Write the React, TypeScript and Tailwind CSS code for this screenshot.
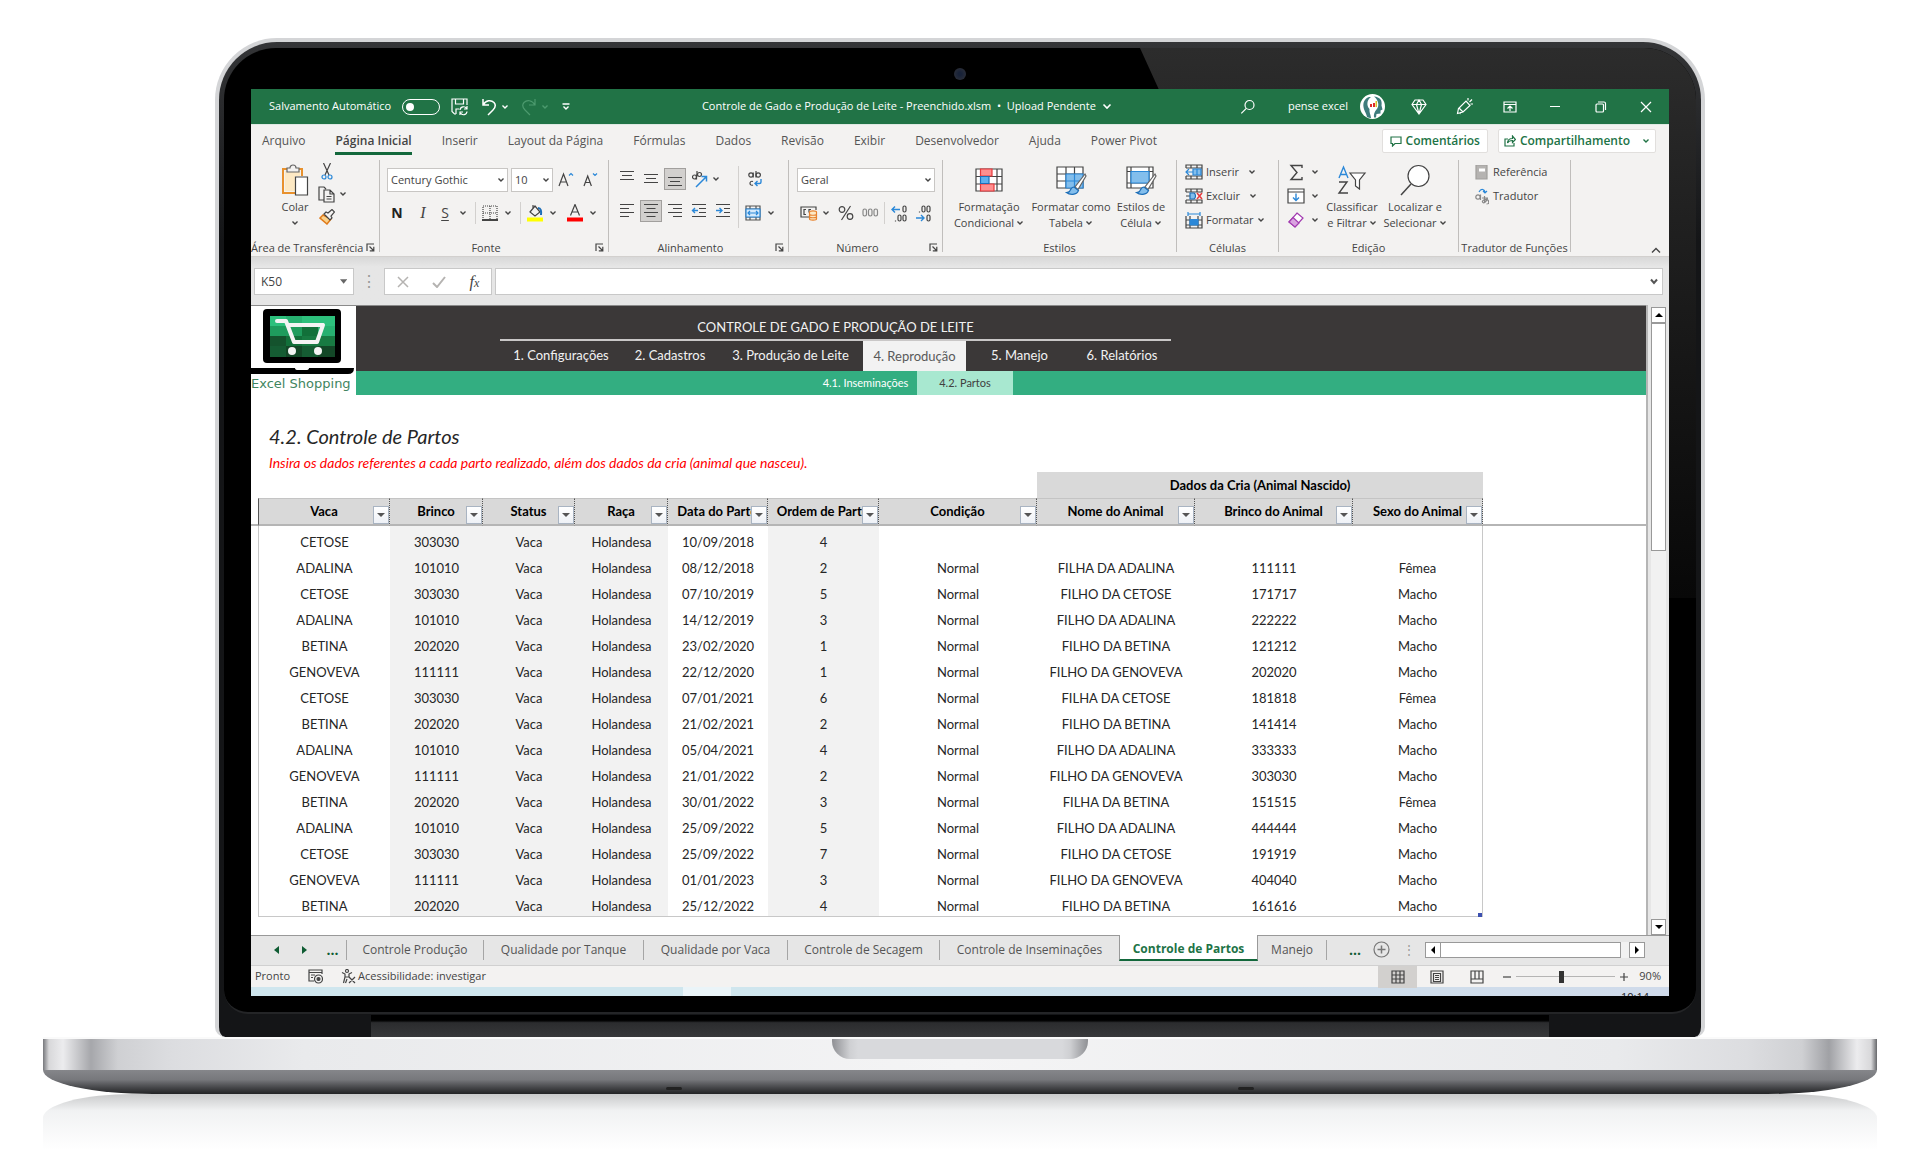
import React from 'react';
import clsx from 'clsx';

type Row = [string, string, string, string, string, string, string, string];

// vaca, brinco, data, ordem, condição, nome da cria, brinco da cria, sexo
const rows: Row[] = [
  ['CETOSE', '303030', '10/09/2018', '4', '', '', '', ''],
  ['ADALINA', '101010', '08/12/2018', '2', 'Normal', 'FILHA DA ADALINA', '111111', 'Fêmea'],
  ['CETOSE', '303030', '07/10/2019', '5', 'Normal', 'FILHO DA CETOSE', '171717', 'Macho'],
  ['ADALINA', '101010', '14/12/2019', '3', 'Normal', 'FILHO DA ADALINA', '222222', 'Macho'],
  ['BETINA', '202020', '23/02/2020', '1', 'Normal', 'FILHO DA BETINA', '121212', 'Macho'],
  ['GENOVEVA', '111111', '22/12/2020', '1', 'Normal', 'FILHO DA GENOVEVA', '202020', 'Macho'],
  ['CETOSE', '303030', '07/01/2021', '6', 'Normal', 'FILHA DA CETOSE', '181818', 'Fêmea'],
  ['BETINA', '202020', '21/02/2021', '2', 'Normal', 'FILHO DA BETINA', '141414', 'Macho'],
  ['ADALINA', '101010', '05/04/2021', '4', 'Normal', 'FILHO DA ADALINA', '333333', 'Macho'],
  ['GENOVEVA', '111111', '21/01/2022', '2', 'Normal', 'FILHO DA GENOVEVA', '303030', 'Macho'],
  ['BETINA', '202020', '30/01/2022', '3', 'Normal', 'FILHA DA BETINA', '151515', 'Fêmea'],
  ['ADALINA', '101010', '25/09/2022', '5', 'Normal', 'FILHO DA ADALINA', '444444', 'Macho'],
  ['CETOSE', '303030', '25/09/2022', '7', 'Normal', 'FILHO DA CETOSE', '191919', 'Macho'],
  ['GENOVEVA', '111111', '01/01/2023', '3', 'Normal', 'FILHO DA GENOVEVA', '404040', 'Macho'],
  ['BETINA', '202020', '25/12/2022', '4', 'Normal', 'FILHO DA BETINA', '161616', 'Macho'],
];

const columns = [
  { title: 'Vaca', width: 'w-[132px]', shaded: false },
  { title: 'Brinco', width: 'w-[93px]', shaded: true },
  { title: 'Status', width: 'w-[92px]', shaded: true },
  { title: 'Raça', width: 'w-[93px]', shaded: true },
  { title: 'Data do Parto', width: 'w-[100px]', shaded: false },
  { title: 'Ordem de Parto', width: 'w-[111px]', shaded: true },
  { title: 'Condição', width: 'w-[158px]', shaded: false },
  { title: 'Nome do Animal', width: 'w-[158px]', shaded: false },
  { title: 'Brinco do Animal', width: 'w-[158px]', shaded: false },
  { title: 'Sexo do Animal', width: 'w-[130px]', shaded: false },
];

const ribbonTabs = [
  'Arquivo', 'Página Inicial', 'Inserir', 'Layout da Página', 'Fórmulas', 'Dados',
  'Revisão', 'Exibir', 'Desenvolvedor', 'Ajuda', 'Power Pivot',
];

interface IconProps {
  w?: number;
  h?: number;
  className?: string;
  children: React.ReactNode;
}

const Icon: React.FC<IconProps> = ({ w = 16, h = 16, className, children }) => (
  <svg
    width={w}
    height={h}
    viewBox={`0 0 ${w} ${h}`}
    fill="none"
    stroke="currentColor"
    strokeWidth="1.2"
    className={clsx('shrink-0', className)}
    aria-hidden="true"
  >
    {children}
  </svg>
);

const Chevron = ({ className }: { className?: string }) => (
  <Icon w={8} h={6} className={className}>
    <path d="M1.5 1.5 4 4l2.5-2.5" strokeWidth="1.4" />
  </Icon>
);

const Tool = ({ label, className, children }: { label: string; className?: string; children: React.ReactNode }) => (
  <button type="button" aria-label={label} className={clsx('flex h-[22px] shrink-0 items-center justify-center', className)}>
    {children}
  </button>
);

const Group = ({ title, width, launcher, children }: { title: string; width: string; launcher?: boolean; children: React.ReactNode }) => (
  <>
    <section className={clsx('relative flex h-24 shrink-0 flex-col', width)}>
      <div className="flex h-20 items-start">{children}</div>
      <h3 className={clsx('text-center leading-4 whitespace-nowrap', launcher && 'pr-4')}>{title}</h3>
      {launcher && (
        <button type="button" aria-label={`Opções de ${title}`} className="absolute right-1 bottom-1">
          <Icon w={9} h={9}>
            <path d="M1 8V1h7M3.5 3.5 7.5 7.5M7.8 3.8v4h-4" />
          </Icon>
        </button>
      )}
    </section>
    <div className="h-[92px] w-px shrink-0 bg-[#c0bebc]" />
  </>
);

const Lines = ({ rows: widths, align, y = 2 }: { rows: number[]; align: 'l' | 'c' | 'r'; y?: number }) => (
  <Icon>
    {widths.map((len, i) => {
      const x = align === 'l' ? 1 : align === 'c' ? (16 - len) / 2 : 15 - len;
      return <path key={i} d={`M${x} ${y + i * 4 + 0.5}h${len}`} />;
    })}
  </Icon>
);

const Brush = () => (
  <g>
    <path d="M29 9 19 22l3 2.500L30 11z" fill="#fff" stroke="#666" />
    <path d="M18 22c-3 0-3.500 3-4.500 4.500-1 1-2.500 1-3 1 3 2.500 10 3 12-2z" fill="#83beec" stroke="#1e6fb8" />
  </g>
);

const BigButton = ({ lines, width, children }: { lines: [string, string]; width: string; children: React.ReactNode }) => (
  <button type="button" className={clsx('flex shrink-0 flex-col items-center pt-1 leading-4 whitespace-nowrap', width)}>
    <span className="mb-[3px] flex h-8 items-center">{children}</span>
    <span>{lines[0]}</span>
    <span className="flex items-center gap-0.5">
      {lines[1]}
      <Chevron />
    </span>
  </button>
);

const TitleBar = () => (
  <header className="flex h-[35px] items-center bg-[#217346] pl-[18px] text-[11px] text-white">
    <span id="autosave" className="w-[133px] whitespace-nowrap">Salvamento Automático</span>
    <button type="button" role="switch" aria-checked="false" aria-labelledby="autosave" className="flex h-4 w-[38px] items-center rounded-full border border-white pl-[3px]">
      <span className="size-2 rounded-full bg-white" />
    </button>
    <Tool label="Salvar" className="ml-[10px] w-5">
      <Icon w={18} h={18}>
        <path d="M5 16H3.500L1 13.500V1h15v6M4.500 1v5h8V1M5 16v-5h3" />
        <path d="M9 12a3.500 3.500 0 0 1 6.500-1.500M16 8v3h-3M16 13.500A3.500 3.500 0 0 1 9.500 15M9 17v-3h3" />
      </Icon>
    </Tool>
    <Tool label="Desfazer" className="ml-[9px] w-5">
      <Icon w={16} h={18}>
        <path d="M2 1v6h6M2 7c3-5 8-5.500 11-2.500 2.500 3 1 5.500-1 7.500L7 17" strokeWidth="1.5" />
      </Icon>
    </Tool>
    <Tool label="Opções de desfazer" className="w-3"><Chevron /></Tool>
    <Tool label="Refazer" className="ml-[8px] w-5 text-[#4c9a6e]">
      <Icon w={16} h={18}>
        <path d="M14 1v6H8M14 7c-3-5-8-5.500-11-2.500C.5 7.500 2 10 4 12l5 5" />
      </Icon>
    </Tool>
    <Tool label="Opções de refazer" className="w-3 text-[#4c9a6e]"><Chevron /></Tool>
    <Tool label="Personalizar" className="ml-[5px] w-5">
      <Icon w={8} h={8}><path d="M.5 1h7M1.500 3.500 4 6l2.500-2.500" strokeWidth="1.4" /></Icon>
    </Tool>
    <button type="button" className="mx-auto flex items-center gap-1.5 whitespace-nowrap">
      <h1>Controle de Gado e Produção de Leite - Preenchido.xlsm&nbsp; •&nbsp; Upload Pendente</h1>
      <Icon w={10} h={7}><path d="m1.500 1.500 3.500 3.500 3.500-3.500" strokeWidth="1.6" /></Icon>
    </button>
    <Tool label="Pesquisar" className="w-5">
      <Icon><circle cx="9.500" cy="6" r="4.500" /><path d="m6.300 9.300-5 5" /></Icon>
    </Tool>
    <button type="button" className="ml-[30px] flex items-center gap-3 whitespace-nowrap">
      pense excel
      <svg width="25" height="25" viewBox="0 0 25 25" aria-hidden="true">
        <circle cx="12.500" cy="12.500" r="12.500" fill="#fff" />
        <path d="M9 3C4 5 3 9 3.500 13 4 17 6 18 7 23c1.500.8 3 1 4 1-.5-4-2-6-1.500-9C6.500 12 6.500 6 11 3z" fill="#3d7c7c" />
        <path d="M14 2.500c6 .5 8.500 4 7.500 9l1 4-2 1v3l-4 .5-.5 3.500h-2c-.5-3 .5-6 2.500-8 3-3 2.500-9-2.500-13z" fill="#3d7c7c" />
        <path d="M10 10h2v3h-2zM13 9h2v4h-2z" fill="#e02b2b" />
        <path d="M15.500 7h1.500v6h-1.500z" fill="#d7c52a" />
      </svg>
    </button>
    <div className="ml-6 flex w-[260px] items-center justify-between pr-[13px]">
      <Tool label="Premium" className="w-5">
        <Icon><path d="M4 1h8l3 4.500L8 15 1 5.500zM1 5.500h14M5.500 5.500 8 15l2.500-9.500L8 1z" /></Icon>
      </Tool>
      <Tool label="Desenhar" className="w-5">
        <Icon w={17} h={17}><path d="m1.500 15.500 1-5L10 3l4 4.500-7 6.500zM3 10l4 4M5 14l-1 2M12 2.500V0M13.500 4 16 1.500M14.500 6H17" /></Icon>
      </Tool>
      <Tool label="Opções da faixa" className="w-5">
        <Icon w={14} h={12}><path d="M1 1h12v10H1zM1 3.500h12M7 10V5.500M4.500 7.500 7 5l2.500 2.500" /></Icon>
      </Tool>
      <Tool label="Minimizar" className="w-5">
        <Icon w={10} h={10}><path d="M0 4.500h10" /></Icon>
      </Tool>
      <Tool label="Restaurar" className="w-5">
        <Icon w={12} h={12}><rect x="1" y="3" width="7.500" height="8" rx="1" /><path d="M3 1h6q1.500 0 1.500 1.500V9" /></Icon>
      </Tool>
      <Tool label="Fechar" className="w-5">
        <Icon w={12} h={12}><path d="m1 1 10 10M11 1 1 11" /></Icon>
      </Tool>
    </div>
  </header>
);

const RibbonTabs = () => (
  <div className="flex h-9 items-start border-t border-[#dfe9e3] pt-1 pr-[13px] pl-[11px] text-xs">
    <nav className="flex items-start gap-[30px] leading-[23px] whitespace-nowrap text-[#555]">
      {ribbonTabs.map((tab) => (
        <button
          key={tab}
          type="button"
          className={clsx(tab === 'Página Inicial' && 'border-b-3 border-[#13683c] font-semibold text-[#444]')}
        >
          {tab}
        </button>
      ))}
    </nav>
    <div className="ml-auto flex gap-2.5 leading-6 font-semibold text-[#217346]">
      <button type="button" className="flex h-6 items-center gap-1 rounded-xs border border-[#e1dfdd] bg-white px-[7px]">
        <Icon w={12} h={11}><path d="M1 1h10v6.500H5L2.500 10V7.500H1z" /></Icon>
        Comentários
      </button>
      <button type="button" className="flex h-6 items-center gap-1 rounded-xs border border-[#e1dfdd] bg-white px-[5px]">
        <Icon w={12} h={12}><path d="M4 4H1v7h9V8M3.500 8c0-3 2-4.500 5-4.500V1L11.500 4.500 8.500 7.500V5.500C6 5.500 4.500 6 3.500 8z" /></Icon>
        Compartilhamento
        <Chevron className="ml-2" />
      </button>
    </div>
  </div>
);

const ClipboardGroup = () => (
  <Group title="Área de Transferência" width="w-32" launcher>
    <button type="button" className="flex w-[62px] flex-col items-center pt-1 pl-[26px] leading-4">
      <Icon w={28} h={32}>
        <path d="M8 5H2v24h12M16 5h5v7" stroke="#e8912d" strokeWidth="2" />
        <path d="M4 7h15v5h-5v15H4z" fill="#fde9c4" stroke="none" />
        <path d="M6 8V4h3c0-4 6-4 6 0h3v4z" fill="#f3f2f1" stroke="#666" />
        <path d="M14.500 13h12v18h-12z" fill="#fff" stroke="#444" />
      </Icon>
      <span className="mt-[3px]">Colar</span>
      <Chevron className="mt-[5px]" />
    </button>
    <div className="flex flex-col pl-[4px]">
      <Tool label="Recortar" className="h-6 w-5">
        <Icon w={12} h={17}>
          <path d="m2.500 0 5.500 12M9.500 0 4 12" />
          <circle cx="3" cy="14" r="2" stroke="#2b88d8" /><circle cx="9" cy="14" r="2" stroke="#2b88d8" />
        </Icon>
      </Tool>
      <div className="flex h-6 items-center">
        <Tool label="Copiar" className="w-[18px]">
          <Icon w={17} h={17}>
            <path d="M6 14H1V1h5l2 2M6 4h6l4 4v8H6zM12 4v4h4M8.500 10.500h5M8.500 13h5" />
          </Icon>
        </Tool>
        <Chevron className="ml-[4px]" />
      </div>
      <Tool label="Pincel de formatação" className="h-6 w-5">
        <Icon w={16} h={16}>
          <path d="m4 6-3 3 7 6 4-5z" fill="#fbd28b" stroke="#e07b1a" strokeWidth="1.5" />
          <path d="m5 5 6 6 2-2-1-2 3.500-4L13 .500 9 4 7 3z" fill="#f3f2f1" stroke="#444" />
        </Icon>
      </Tool>
    </div>
  </Group>
);

const FontGroup = () => (
  <Group title="Fonte" width="w-[228px]" launcher>
    <div className="flex flex-col gap-[10px] pt-2 pl-[7px]">
      <div className="flex h-6 items-center">
        <label className="relative mr-[3px] flex h-6 w-[121px] items-center border border-[#c8c6c4] bg-white">
          <select aria-label="Fonte" className="w-full appearance-none pl-[3px] outline-none"><option>Century Gothic</option></select>
          <Chevron className="pointer-events-none absolute right-0.5" />
        </label>
        <label className="relative mr-px flex h-6 w-[42px] items-center border border-[#c8c6c4] bg-white">
          <select aria-label="Tamanho" className="w-full appearance-none pl-[3px] outline-none"><option>10</option></select>
          <Chevron className="pointer-events-none absolute right-0.5" />
        </label>
        <Tool label="Aumentar fonte" className="w-6">
          <Icon w={16} h={16}><path d="m1 14 4.500-12L10 14M2.500 10h6" /><path d="m11 3.500 2-2 2 2" stroke="#2b88d8" /></Icon>
        </Tool>
        <Tool label="Diminuir fonte" className="w-6">
          <Icon w={16} h={16}><path d="m2 14 3.700-10 3.700 10M3.500 10.500h4.500" /><path d="m11 1.500 2 2 2-2" stroke="#2b88d8" /></Icon>
        </Tool>
      </div>
      <div className="flex items-center text-sm">
        <Tool label="Negrito" className="w-6 pr-1 font-bold text-[#222]">N</Tool>
        <Tool label="Itálico" className="w-6 font-['Liberation_Serif',serif] text-base italic">I</Tool>
        <Tool label="Sublinhado" className="w-5 underline underline-offset-2">S</Tool>
        <Tool label="Opções de sublinhado" className="w-4"><Chevron /></Tool>
        <span className="mx-1 h-[22px] w-px bg-[#d2d0ce]" />
        <Tool label="Bordas" className="w-5">
          <Icon><path d="M1 15V1h14v14M8 1v14M1 8h14" strokeDasharray="1 1" /><path d="M0 15h16" strokeWidth="2" /></Icon>
        </Tool>
        <Tool label="Opções de bordas" className="w-4"><Chevron /></Tool>
        <span className="mx-1 h-[22px] w-px bg-[#d2d0ce]" />
        <Tool label="Cor de preenchimento" className="w-5">
          <Icon w={16} h={18}>
            <path d="m3 8 5-6 5 6-5 4zM6 5V1" /><path d="M11 4c3 0 3.500 3 3 7" stroke="#1e6fb8" strokeWidth="2" />
            <path d="M0 15.500h16" stroke="#ff0" strokeWidth="4" />
          </Icon>
        </Tool>
        <Tool label="Opções de preenchimento" className="w-4"><Chevron /></Tool>
        <Tool label="Cor da fonte" className="ml-1 w-5">
          <Icon w={16} h={18}>
            <path d="m3.500 11.500 4.500-11 4.500 11M5 8h6" /><path d="M0 15.500h16" stroke="#f00" strokeWidth="4" />
          </Icon>
        </Tool>
        <Tool label="Opções de cor" className="w-4"><Chevron /></Tool>
      </div>
    </div>
  </Group>
);

const AlignGroup = () => (
  <Group title="Alinhamento" width="w-[179px]" launcher>
    <div className="flex flex-col gap-3 pt-2 pl-[7px]">
      <div className="flex gap-0.5">
        <Tool label="Alinhar em cima" className="w-[22px]"><Lines rows={[14, 10, 14]} align="c" y={0} /></Tool>
        <Tool label="Alinhar no meio" className="w-[22px]"><Lines rows={[14, 10, 14]} align="c" y={3} /></Tool>
        <Tool label="Alinhar embaixo" className="h-6 w-[22px] border border-[#a19f9d] bg-[#d2d0ce]"><Lines rows={[14, 10, 14]} align="c" y={6} /></Tool>
        <Tool label="Orientação" className="w-[22px]">
          <Icon w={17} h={17}>
            <circle cx="3.500" cy="6" r="2" /><path d="M5.500 3.500v5" /><circle cx="8.500" cy="3.500" r="2" /><path d="M6 0v5.500" />
            <path d="M5 16 15 6M10.500 5.500H15.500V10.500" stroke="#2b88d8" strokeWidth="1.5" />
          </Icon>
        </Tool>
        <Chevron className="self-center" />
      </div>
      <div className="-mt-0.5 flex gap-0.5">
        <Tool label="Alinhar à esquerda" className="w-[22px]"><Lines rows={[14, 9, 14, 9]} align="l" y={1} /></Tool>
        <Tool label="Centralizar" className="h-6 w-[22px] border border-[#a19f9d] bg-[#d2d0ce]"><Lines rows={[14, 9, 14, 9]} align="c" y={1} /></Tool>
        <Tool label="Alinhar à direita" className="w-[22px]"><Lines rows={[14, 9, 14, 9]} align="r" y={1} /></Tool>
        <Tool label="Diminuir recuo" className="w-[22px]">
          <Icon><path d="M1 1.500h14M8 5.500h7M8 9.500h7M1 13.500h14" /><path d="M7 7.500H1.500M4 5 1.500 7.500 4 10" stroke="#2b88d8" strokeWidth="1.400" /></Icon>
        </Tool>
        <Tool label="Aumentar recuo" className="w-[22px]">
          <Icon><path d="M1 1.500h14M9 5.500h6M9 9.500h6M1 13.500h14" /><path d="M1 7.500h6M4.500 5 7 7.500 4.500 10" stroke="#2b88d8" strokeWidth="1.400" /></Icon>
        </Tool>
      </div>
    </div>
    <span className="mx-1 mt-1.5 h-[62px] w-px bg-[#d2d0ce]" />
    <div className="flex flex-col gap-3 pt-2">
      <Tool label="Quebrar texto" className="w-6">
        <Icon w={16} h={18}>
          <circle cx="4" cy="5" r="2.200" /><path d="M6.200 2.500v5M9 1v6.500" /><circle cx="11.200" cy="5" r="2.200" />
          <path d="M6 11.500c-4-1.500-4 5 0 3.500" /><path d="M14 9v3q0 1.500-1.500 1.500H8M10.500 11 8 13.500l2.500 2.500" stroke="#2b88d8" strokeWidth="1.400" />
        </Icon>
      </Tool>
      <div className="flex items-center">
        <Tool label="Mesclar e centralizar" className="w-5">
          <Icon>
            <path d="M1 1h14v14H1zM1 4h14M1 12h14M5 1v3M11 1v3M5 12v3M11 12v3" stroke="#555" />
            <path d="M1 4h14v8H1z" fill="#d6eafb" stroke="#2b88d8" />
            <path d="M3 8h10M5 6 3 8l2 2M11 6l2 2-2 2" stroke="#2b88d8" />
          </Icon>
        </Tool>
        <Tool label="Opções de mesclagem" className="w-4"><Chevron /></Tool>
      </div>
    </div>
  </Group>
);

const NumberGroup = () => (
  <Group title="Número" width="w-[153px]" launcher>
    <div className="flex flex-col gap-[10px] pt-2 pl-[8px]">
      <label className="relative flex h-6 w-[138px] items-center border border-[#c8c6c4] bg-white">
        <select aria-label="Formato de número" className="w-full appearance-none pl-[3px] outline-none"><option>Geral</option></select>
        <Chevron className="pointer-events-none absolute right-0.5" />
      </label>
      <div className="flex items-center">
        <Tool label="Formato de contabilização" className="w-6">
          <Icon w={18} h={16}>
            <path d="M9 12H1V2h15v3M6 4.500H4v5h2M11 4.500H9v3" />
            <path d="M9.500 7c0-1.500 7-1.500 7 0v7c0 1.500-7 1.500-7 0zM9.500 9.500c1 1 6 1 7 0M9.500 12c1 1 6 1 7 0" fill="#fde9c4" stroke="#e8822d" />
          </Icon>
        </Tool>
        <Tool label="Opções de contabilização" className="w-2.5"><Chevron /></Tool>
        <Tool label="Porcentagem" className="ml-[3px] w-6">
          <Icon><circle cx="4" cy="4.500" r="2.800" /><circle cx="12" cy="11.500" r="2.800" /><path d="M12.500 1 3.500 15" /></Icon>
        </Tool>
        <Tool label="Separador de milhares" className="w-6 text-[#888]">
          <Icon w={17} h={10}><rect x="1" y="1" width="3.500" height="7" rx="1.700" /><rect x="6.500" y="1" width="3.500" height="7" rx="1.700" /><rect x="12" y="1" width="3.500" height="7" rx="1.700" /></Icon>
        </Tool>
        <span className="mx-[2px] h-[22px] w-px bg-[#d2d0ce]" />
        <Tool label="Aumentar casas decimais" className="w-6">
          <Icon w={17} h={17}>
            <path d="M1 4.500h8M4 1.500l-3 3 3 3" stroke="#2b88d8" strokeWidth="1.400" />
            <rect x="12" y="1" width="3" height="6" rx="1.500" /><rect x="7" y="10" width="3" height="6" rx="1.500" /><rect x="12" y="10" width="3" height="6" rx="1.500" /><path d="M4.500 15.500v1" />
          </Icon>
        </Tool>
        <Tool label="Diminuir casas decimais" className="w-6">
          <Icon w={17} h={17}>
            <rect x="7" y="1" width="3" height="6" rx="1.500" /><rect x="12" y="1" width="3" height="6" rx="1.500" /><rect x="12" y="10" width="3" height="6" rx="1.500" /><path d="M4.500 6.500v1" />
            <path d="M1 13h8M6 10l3 3-3 3" stroke="#2b88d8" strokeWidth="1.400" />
          </Icon>
        </Tool>
      </div>
    </div>
  </Group>
);

const StylesGroup = () => (
  <Group title="Estilos" width="w-[233px]">
    <BigButton lines={['Formatação', 'Condicional']} width="w-[82px] ml-[5px]">
      <Icon w={28} h={24}>
        <path d="M1 1h26v22H1zM1 8.500h26M1 16h26M22 1v22" fill="#fff" />
        <path d="M5.500 1H17v7H5.500zM5.500 16H19v7H5.500z" fill="#ff8f8f" stroke="#e8393c" />
        <path d="M5.500 8.500H14v7H5.500z" fill="#5fb0ee" stroke="#1e6fb8" />
      </Icon>
    </BigButton>
    <BigButton lines={['Formatar como', 'Tabela']} width="w-[82px]">
      <Icon w={31} h={31}>
        <path d="M1 2h26v21H1zM1 9h26M1 16h26M10 2v21M18.500 2v21" fill="#fff" />
        <path d="M10 9h17v14H10zM10 16h17M18.500 9v14" fill="#83beec" stroke="#2b88d8" />
        <Brush />
      </Icon>
    </BigButton>
    <BigButton lines={['Estilos de', 'Célula']} width="w-[58px]">
      <Icon w={31} h={31}>
        <path d="M1 2h26v21H1zM1 6.500h26M1 18h26M5 2v21M23 2v21" fill="#fff" />
        <path d="M5 6.500h18V18H5z" fill="#83beec" stroke="#2b88d8" />
        <Brush />
      </Icon>
    </BigButton>
  </Group>
);

const CellsGroup = () => (
  <Group title="Células" width="w-[101px]">
    <div className="flex flex-col pl-2">
      <button type="button" className="flex h-6 items-center gap-[3px]">
        <Icon w={18} h={16}>
          <path d="M1 4V1h16v14H1v-3M1 4h16M1 12h16M6 1v3M12 1v3M6 12v3M12 12v3" />
          <path d="M8 5h8v6H8zM12 5v6" fill="#83beec" stroke="#2b88d8" /><path d="M8 8H1M4 5 1 8l3 3" stroke="#2b88d8" />
        </Icon>
        Inserir
        <Chevron className="ml-1.5" />
      </button>
      <button type="button" className="flex h-6 items-center gap-[3px]">
        <Icon w={18} h={16}>
          <path d="M1 4V1h16v3H1M1 12h16v3H1v-3M6 1v3M12 1v3M6 12v3M12 12v3M1 8h4" />
          <path d="M5 5h4c2 1 2 5 0 6H5z" fill="#83beec" stroke="#1e6fb8" /><path d="m12 5 5 6M17 5l-5 6" stroke="#e8393c" strokeWidth="1.500" />
        </Icon>
        Excluir
        <Chevron className="ml-1.5" />
      </button>
      <button type="button" className="flex h-6 items-center gap-[3px]">
        <Icon w={18} h={17}>
          <path d="M1 4v12h16V4M1 8h16M1 13h16M5 4v12M13 4v12" />
          <path d="M5 7.500h8V13H5z" fill="#2b88d8" stroke="#2b88d8" /><path d="M3 2h12M3 0v4M15 0v4" stroke="#2b88d8" />
        </Icon>
        Formatar
        <Chevron />
      </button>
    </div>
  </Group>
);

const EditGroup = () => (
  <Group title="Edição" width="w-[179px]">
    <div className="flex w-11 flex-col pl-2">
      <button type="button" aria-label="AutoSoma" className="flex h-6 items-center justify-between pr-1">
        <Icon w={16} h={17} className="ml-0.5"><path d="M13 4V1.500H2l6 7-6 7h11V13" strokeWidth="1.400" /></Icon>
        <Chevron />
      </button>
      <button type="button" aria-label="Preencher" className="flex h-6 items-center justify-between pr-1">
        <Icon w={18} h={16}><path d="M1 1h16v14H1zM1 4h16" fill="#fff" /><path d="M9 5.500v7M6 9.500l3 3 3-3" stroke="#2b88d8" strokeWidth="1.400" /></Icon>
        <Chevron />
      </button>
      <button type="button" aria-label="Limpar" className="flex h-6 items-center justify-between pr-1">
        <Icon w={18} h={18}>
          <path d="m10 2 6 5-8 9-6-5z" fill="#fff" stroke="#a23bb0" /><path d="m6 6.500 6 5.500-4 4-6-5z" fill="#d9a3e0" stroke="#a23bb0" />
        </Icon>
        <Chevron />
      </button>
    </div>
    <BigButton lines={['Classificar', 'e Filtrar']} width="w-[58px]">
      <Icon w={30} h={30}>
        <path d="m2 13 4.500-11L11 13M3.500 9.500h6" stroke="#2b88d8" strokeWidth="1.400" />
        <path d="M2 17h8L2 28h9" strokeWidth="1.400" />
        <path d="M13 8h15l-5.500 7v9l-4-3v-6z" fill="#fff" />
      </Icon>
    </BigButton>
    <BigButton lines={['Localizar e', 'Selecionar']} width="w-[68px]">
      <Icon w={30} h={32}><circle cx="18.500" cy="12" r="10.500" fill="#fff" /><path d="M11 20 1 31" strokeWidth="1.500" /></Icon>
    </BigButton>
  </Group>
);

const TranslateGroup = () => (
  <Group title="Tradutor de Funções" width="w-[111px]">
    <div className="flex flex-col pl-4">
      <button type="button" className="flex h-6 items-center gap-1">
        <Icon w={14} h={15}><path d="M1 0h11v14H1z" fill="#b5b3b1" stroke="#a19f9d" /><path d="M4 3.500h6v3H4z" fill="#fff" stroke="none" /></Icon>
        Referência
      </button>
      <button type="button" className="flex h-6 items-center gap-1">
        <Icon w={14} h={17}>
          <circle cx="3" cy="9" r="2.200" stroke="#888" /><path d="M5.500 6.500V12" stroke="#888" />
          <path d="M4 4c2-4 6-3 6 1M8 3l2 2 2-2" stroke="#2b88d8" />
          <path d="M7 10h6M9.500 8v7M12.500 10c-1 4-4 6-5 4s5-4 6-1-1 3-2 3" stroke="#888" />
        </Icon>
        Tradutor
      </button>
    </div>
  </Group>
);

const FormulaBar = () => (
  <div className="flex h-[49px] items-start border-t border-[#d2d0ce] bg-linear-to-b from-[#d8d8d8] to-[#e6e6e6] to-20% pt-[11px] pr-[6px] pl-[3px]">
    <div className="flex h-[27px] w-[100px] items-center border border-[#c8c8c8] bg-white pr-1.5">
      <input aria-label="Caixa de nome" defaultValue="K50" className="w-full pl-[6px] text-xs outline-none" />
      <svg width="8" height="5" viewBox="0 0 8 5" aria-hidden="true"><path d="M0 0h8L4 5z" fill="#666" /></svg>
    </div>
    <span className="w-[30px] text-center text-base leading-[27px] text-[#999]">⋮</span>
    <div className="flex h-[27px] w-[108px] items-center justify-around border border-[#c8c8c8] bg-white text-[#b5b3b1]">
      <button type="button" aria-label="Cancelar"><Icon w={12} h={12}><path d="m1 1 10 10M11 1 1 11" strokeWidth="1.500" /></Icon></button>
      <button type="button" aria-label="Inserir"><Icon w={14} h={12}><path d="m1 7 4 4 8-10" strokeWidth="2" /></Icon></button>
      <button type="button" aria-label="Inserir função" className="font-['Liberation_Serif',serif] text-base leading-5 text-[#444] italic">f<span className="text-xs">x</span></button>
    </div>
    <div className="ml-[3px] flex h-[27px] flex-1 items-center border border-[#c8c8c8] bg-white pr-1">
      <input aria-label="Barra de fórmulas" className="w-full px-1 text-xs outline-none" />
      <Icon w={8} h={7} className="text-[#555]"><path d="M1 1.500 4 5l3-3.500" strokeWidth="2" /></Icon>
    </div>
  </div>
);

const Logo = () => (
  <div className="flex w-[105px] shrink-0 flex-col bg-white">
    <svg width="105" height="70" viewBox="0 0 105 70" aria-label="Excel Shopping">
      <rect x="12" y="3" width="78" height="54" rx="4" fill="#000" />
      <path d="M19 10h65v10H19z" fill="#2dc07c" />
      <path d="M19 20h65v10H19z" fill="#1f9c5d" />
      <path d="M19 30h65v10H19z" fill="#187a42" />
      <path d="M19 40h65v11H19z" fill="#155c33" />
      <path d="M35 10h16v10H35zM67 20h17v10H67z" fill="#27b070" />
      <path d="M51 20h16v10H51zM35 30h16v10H35z" fill="#12703a" />
      <path d="M19 30h16v10H19zM35 40h16v11H35zM67 40h17v11H67z" fill="#12381f" opacity=".6" />
      <path d="M26 15h9l8 21h23l6-17H38" fill="none" stroke="#f4f4f4" strokeWidth="4" strokeLinecap="round" strokeLinejoin="round" />
      <circle cx="41" cy="45" r="4" fill="#f4f4f4" />
      <circle cx="67" cy="45" r="4" fill="#f4f4f4" />
      <path d="M0 62h44q0 2 3 2h8q3 0 3-2h45q0 6-6 6H0z" fill="#000" />
    </svg>
    <span className="font-['DejaVu_Sans',sans-serif] text-[13px] leading-4 whitespace-nowrap text-[#3f8560]">Excel Shopping</span>
  </div>
);

const SheetHeader = () => (
  <div className="flex border-t border-[#8a8a8a] text-[13px] text-[#f2f2f2]">
    <Logo />
    <div className="flex-1">
      <div className="h-[65px] bg-[#3b3838] pl-[144px]">
        <div className="flex w-[671px] flex-col">
          <h2 className="border-b-2 border-[#c9c7c7] pt-[9px] text-center leading-6">CONTROLE DE GADO E PRODUÇÃO DE LEITE</h2>
          <nav className="flex h-[30px] items-center whitespace-nowrap">
            <a href="#configuracoes" className="w-[122px] text-center">1. Configurações</a>
            <a href="#cadastros" className="w-[96px] text-center">2. Cadastros</a>
            <a href="#producao" className="w-[145px] text-center">3. Produção de Leite</a>
            <a href="#reproducao" className="h-full w-[103px] bg-[#f2f2f2] text-center leading-[30px] text-[#595959]">4. Reprodução</a>
            <a href="#manejo" className="w-[107px] text-center">5. Manejo</a>
            <a href="#relatorios" className="w-[98px] text-center">6. Relatórios</a>
          </nav>
        </div>
      </div>
      <nav className="flex h-6 bg-[#33ae81] pl-[458px] text-[11px] leading-6">
        <a href="#inseminacoes" className="w-[103px] text-center text-white">4.1. Inseminações</a>
        <a href="#partos" className="w-24 bg-[#a8e8d0] text-center text-[#404040]">4.2. Partos</a>
      </nav>
    </div>
  </div>
);

const BirthTable = () => (
  <div className="flex">
    <div className="mt-[52px] w-[7px] border-t-2 border-[#b5b5b5]" />
    <table className="w-[calc(100%-170px)] table-fixed border-separate border-spacing-0 text-[13px] text-[#262626]">
      <colgroup>
        {columns.map((col) => <col key={col.title} className={col.width} />)}
      </colgroup>
      <thead className="text-black">
        <tr className="h-[26px]">
          <td colSpan={7} />
          <th colSpan={3} className="bg-[#d9d9d9] p-0 pt-0.5 font-bold">Dados da Cria (Animal Nascido)</th>
        </tr>
        <tr className="h-7">
          {columns.map((col) => (
            <th key={col.title} className="relative border-t border-r border-b-2 border-t-[#c4c4c4] border-r-[#555] border-b-[#b5b5b5] bg-[#d9d9d9] p-0 font-bold [border-right-style:dotted] first:border-l first:border-l-[#555]">
              <div className="flex justify-center overflow-hidden whitespace-nowrap">{col.title}</div>
              <button type="button" aria-label={`Filtrar ${col.title}`} className="absolute right-0 bottom-0 flex h-[18px] w-4 items-center justify-center border border-[#a9b4c2] bg-linear-to-b from-white to-[#eef1f6]">
                <svg width="8" height="4" viewBox="0 0 8 4" aria-hidden="true"><path d="M0 0h8L4 4z" fill="#555" /></svg>
              </button>
            </th>
          ))}
        </tr>
      </thead>
      <tbody>
        {rows.map(([vaca, brinco, ...rest], i) => (
          <tr key={i} className="h-[26px]">
            {[vaca, brinco, 'Vaca', 'Holandesa', ...rest].map((value, c) => (
              <td
                key={c}
                className={clsx(
                  'p-0 pt-1.5 text-center leading-5 whitespace-nowrap first:border-l first:border-[#c8c8c8] last:border-r last:border-[#c8c8c8]',
                  columns[c].shaded && 'bg-[#f2f2f2]',
                  i === rows.length - 1 && 'border-b border-[#c8c8c8]',
                )}
              >
                {value}
              </td>
            ))}
          </tr>
        ))}
      </tbody>
    </table>
    <div className="flex flex-1 flex-col">
      <div className="mt-[52px] flex-1 border-t-2 border-[#b5b5b5]" />
      <span className="-ml-[5px] size-1 bg-[#3c50b0]" />
    </div>
  </div>
);

const VerticalScroll = () => (
  <div className="flex w-[23px] flex-col border-l-2 border-[#b5b5b5] bg-[#e6e6e6] px-[3px] pt-0.5">
    <button type="button" aria-label="Rolar para cima" className="flex h-4 items-center justify-center border border-[#999] bg-white">
      <svg width="8" height="4" viewBox="0 0 8 4" aria-hidden="true"><path d="M0 4h8L4 0z" fill="#000" /></svg>
    </button>
    <div className="flex-1 bg-[#f1f1f1]"><div className="h-[228px] border border-[#999] bg-white" /></div>
    <button type="button" aria-label="Rolar para baixo" className="flex h-4 items-center justify-center border border-[#999] bg-white">
      <svg width="8" height="4" viewBox="0 0 8 4" aria-hidden="true"><path d="M0 0h8L4 4z" fill="#000" /></svg>
    </button>
  </div>
);

const SheetTabs = () => (
  <div className="flex h-[30px] items-center border-t border-[#999] bg-[#e6e6e6] pr-6 pb-0.5 pl-[21px] text-xs whitespace-nowrap text-[#555]">
    <button type="button" aria-label="Anterior" className="flex w-2 justify-center"><svg width="5" height="8" viewBox="0 0 5 8"><path d="M5 0v8L0 4z" fill="#0f5c33" /></svg></button>
    <button type="button" aria-label="Próxima" className="ml-5 flex w-2 justify-center"><svg width="5" height="8" viewBox="0 0 5 8"><path d="M0 0v8l5-4z" fill="#0f5c33" /></svg></button>
    <button type="button" className="ml-[15px] w-[23px] pr-1 text-center text-sm font-bold text-[#0f5c33]">...</button>
    <button type="button" className="h-5 w-[138px] border-x border-[#a5a5a5] leading-5">Controle Produção</button>
    <button type="button" className="h-5 w-[160px] border-r border-[#a5a5a5] leading-5">Qualidade por Tanque</button>
    <button type="button" className="h-5 w-[144px] border-r border-[#a5a5a5] leading-5">Qualidade por Vaca</button>
    <button type="button" className="h-5 w-[152px] border-r border-[#a5a5a5] leading-5">Controle de Secagem</button>
    <button type="button" className="h-5 w-[179px] leading-5">Controle de Inseminações</button>
    <button type="button" className="-mt-px h-[26px] w-[139px] self-start border-x border-b-2 border-x-[#999] border-b-[#13683c] bg-white pt-1 font-bold text-[#217346]">Controle de Partos</button>
    <button type="button" className="h-5 w-[69px] border-r border-[#a5a5a5] leading-5">Manejo</button>
    <button type="button" className="ml-[18px] w-5 text-sm font-bold text-[#0f5c33]">...</button>
    <button type="button" aria-label="Nova planilha" className="ml-2 text-[#777]">
      <Icon w={17} h={17}><circle cx="8.500" cy="8.500" r="7.500" /><path d="M8.500 4.500v8M4.500 8.500h8" strokeWidth="1.500" /></Icon>
    </button>
    <span className="ml-[13px] w-3 text-center text-[#999]">⋮</span>
    <div className="ml-auto flex h-4 w-[220px]">
      <button type="button" aria-label="Rolar para a esquerda" className="flex w-4 items-center justify-center border border-[#999] bg-white"><svg width="4" height="8" viewBox="0 0 4 8"><path d="M4 0v8L0 4z" fill="#000" /></svg></button>
      <div className="flex-1 border border-l-0 border-[#999] bg-white" />
      <div className="w-2 bg-[#f1f1f1]" />
      <button type="button" aria-label="Rolar para a direita" className="flex w-4 items-center justify-center border border-[#999] bg-white"><svg width="4" height="8" viewBox="0 0 4 8"><path d="M0 0v8l4-4z" fill="#000" /></svg></button>
    </div>
  </div>
);

const StatusBar = () => (
  <footer className="flex h-[22px] items-center border-t border-[#d0d0d0] bg-[#f3f2f1] pl-1 whitespace-nowrap">
    <span className="w-[53px]">Pronto</span>
    <Icon w={15} h={15}><path d="M6 12H1V1h13v4M1 3.500h13M3 6h4M3 8.500h2" /><circle cx="10.500" cy="10" r="4" /><circle cx="10.500" cy="10" r="1.500" fill="currentColor" /></Icon>
    <button type="button" className="ml-[18px] flex items-center gap-0.5">
      <Icon w={15} h={15}><circle cx="6" cy="2" r="1.500" /><path d="M1 3.500 4 5v3l-1.500 6M11 3.500 8 5v3M4 8l4 0M8 8l6 6M14 8l-6 6M4.500 14 6 10" /></Icon>
      Acessibilidade: investigar
    </button>
    <div className="ml-auto flex h-full items-center">
      <Tool label="Normal" className="w-[39px] bg-[#d2d0ce]"><Icon w={14} h={14}><path d="M1 1h12v12H1zM1 5h12M1 9h12M5 1v12M9 1v12" /></Icon></Tool>
      <Tool label="Layout da página" className="w-10"><Icon w={14} h={14}><path d="M1 1h12v12H1zM3.500 3.500h7v8h-7zM5 5.500h4M5 7.500h4M5 9.500h4" /></Icon></Tool>
      <Tool label="Quebra de página" className="w-10"><Icon w={14} h={14}><path d="M1 1h12v12H1zM5 1v8h8M9 1v8M1 9h4" /></Icon></Tool>
      <button type="button" aria-label="Reduzir" className="ml-[2px] w-4"><Icon w={8} h={8} className="mx-auto"><path d="M0 4h8" /></Icon></button>
      <input
        type="range"
        aria-label="Zoom"
        min={10}
        max={200}
        defaultValue={96}
        className="mx-px h-4 w-[99px] appearance-none bg-linear-to-b from-transparent from-[7px] via-[#777] via-[7px] to-transparent to-[8px] [&::-webkit-slider-thumb]:h-3 [&::-webkit-slider-thumb]:w-[5px] [&::-webkit-slider-thumb]:appearance-none [&::-webkit-slider-thumb]:bg-[#333]"
      />
      <button type="button" aria-label="Ampliar" className="w-4"><Icon w={8} h={8} className="mx-auto"><path d="M0 4h8M4 0v8" /></Icon></button>
      <span className="w-[37px] pr-[8px] text-right">90%</span>
    </div>
  </footer>
);

const Screen = () => (
  <main className="relative overflow-hidden bg-[#f3f2f1] font-['Open_Sans','Noto_Sans',sans-serif] text-[11px] text-[#444]">
    <TitleBar />
    <RibbonTabs />
    <div className="flex h-24">
      <ClipboardGroup />
      <FontGroup />
      <AlignGroup />
      <NumberGroup />
      <StylesGroup />
      <CellsGroup />
      <EditGroup />
      <TranslateGroup />
      <button type="button" aria-label="Recolher faixa" className="mr-2 mb-0.5 ml-auto self-end"><Icon w={10} h={7}><path d="m1 5.500 4-4 4 4" strokeWidth="1.400" /></Icon></button>
    </div>
    <FormulaBar />
    <div className="flex">
      <div className="flex-1 bg-white pb-[18px] font-['Lato',sans-serif]">
        <SheetHeader />
        <h2 className="mt-7 pl-[18px] text-xl leading-[26px] text-[#262626] italic">4.2. Controle de Partos</h2>
        <p className="mt-1.5 mb-px pl-[18px] text-sm leading-4 text-[#f00] italic">
          Insira os dados referentes a cada parto realizado, além dos dados da cria (animal que nasceu).
        </p>
        <BirthTable />
      </div>
      <VerticalScroll />
    </div>
    <SheetTabs />
    <StatusBar />
    {/* top edge of the taskbar, with the clock running off the screen */}
    <div className="flex h-[9px] justify-end overflow-hidden bg-[linear-gradient(to_right,#cfe6ee_0,#cfe6ee_432px,#eaf4f8_432px,#eaf4f8_480px,#cfe6ee_480px,#cfdaea)] pr-5 leading-5 text-[#222]">
      <span>10:14</span>
    </div>
  </main>
);

const App: React.FC = () => (
  <div className="overflow-hidden bg-white pt-[38px]">
    <div className="mx-[215px] rounded-t-[62px] rounded-b-[10px] border-4 border-b-0 border-[#d4d5d7] bg-linear-to-b from-[#343537] to-[#141517] to-20%">
      <div className="px-[5px] pt-[6px]">
        <div className="relative overflow-hidden rounded-t-[52px] rounded-b-[24px] border-b-2 border-[#242527] bg-black px-[27px] pt-[41px] pb-4">
          {/* glare on the right side of the glass */}
          <div className="absolute top-0 right-0 h-[550px] w-[556px] bg-linear-to-b from-[#2c2c2c] to-[#080808] [clip-path:polygon(0_0,100%_0,100%_100%,45%_100%)]" />
          <div className="absolute top-5 left-1/2 size-3 -translate-x-1/2 rounded-full bg-radial from-[#182238] from-20% to-[#333338]" />
          <Screen />
        </div>
      </div>
      <div className="mx-[152px] mt-px h-[22px] bg-linear-to-b from-black from-20% via-[#2b2c2e] via-35% to-[#37383a]" />
    </div>
    <div className="mx-[43px]">
      <div className="flex h-[33px] justify-center border-t-2 border-[#fafafa] bg-[linear-gradient(to_right,#77787c_0,#d8d8da_6px,#ececee_20px,#a6a7ab_48px,#cfd0d3_75px,#dcdde0_130px,#e9eaec_260px,#f4f4f5_50%,#e9eaec_calc(100%-260px),#dcdde0_calc(100%-130px),#cfd0d3_calc(100%-75px),#a0a1a5_calc(100%-48px),#ececee_calc(100%-20px),#d8d8da_calc(100%-6px),#66676b_100%)]">
        <div className="h-5 w-[256px] rounded-b-[18px] bg-[linear-gradient(to_right,#8f9094,#cfd0d3_18px,#d8d9dc_26px,#d8d9dc_calc(100%-26px),#cfd0d3_calc(100%-18px),#8f9094)]" />
      </div>
      <div className="flex h-6 items-end justify-center gap-[556px] bg-linear-to-b from-[#85868a] via-[#77787c] via-40% to-[#222325] [border-bottom-left-radius:110px_24px] [border-bottom-right-radius:110px_24px]">
        <span className="mb-1 h-[3px] w-4 rounded-full bg-[#222]" />
        <span className="mb-1 h-[3px] w-4 rounded-full bg-[#222]" />
      </div>
      <div className="h-14 bg-linear-to-b from-[#c9cacb] via-[#f1f2f3] via-30% to-white [border-top-left-radius:90px_24px] [border-top-right-radius:90px_24px]" />
    </div>
  </div>
);

export default App;
